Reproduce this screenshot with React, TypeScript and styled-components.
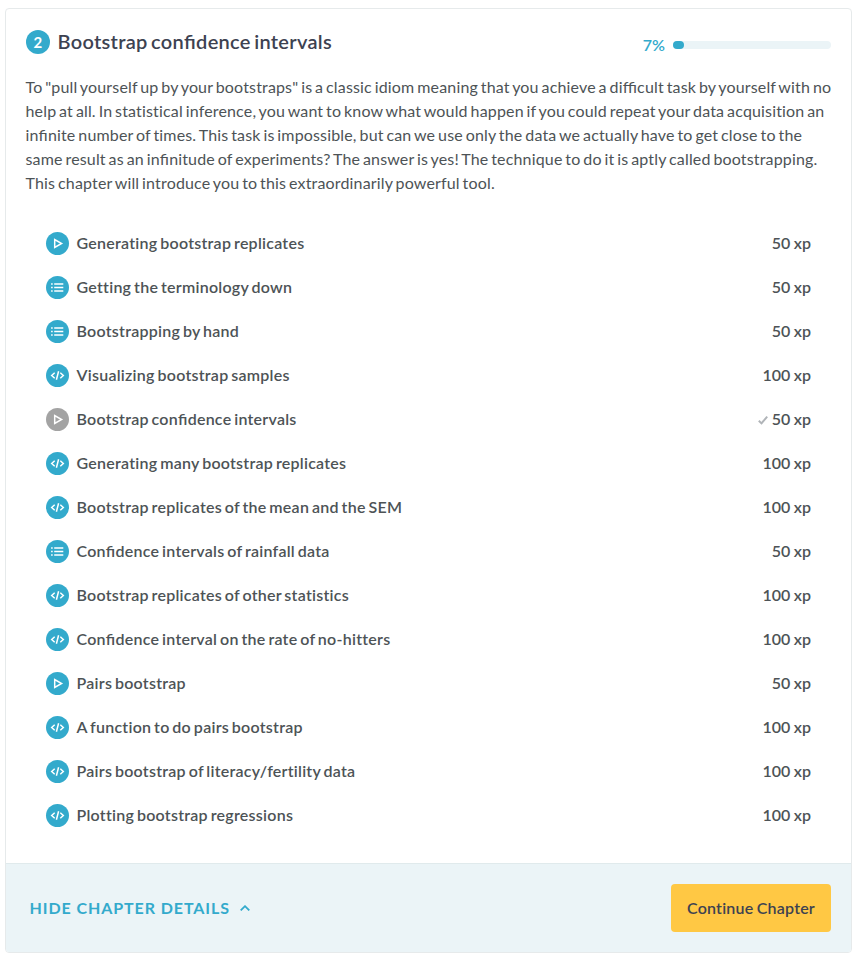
import React from "react";
import styled, { createGlobalStyle } from "styled-components";

const Global = createGlobalStyle`
  *, *::before, *::after { box-sizing: border-box; }
  body {
    margin: 0;
    background: #fff;
    color: #4d5356;
    font: 400 16px/24px Lato, "Liberation Sans", sans-serif;
    font-variant-ligatures: none;
    letter-spacing: 0.25px;
    word-spacing: -1.4px;
  }
`;

const Card = styled.article`
  width: 847px;
  height: 945px;
  margin: 8px 0 0 5px;
  border: 1px solid #e6eaeb;
  border-radius: 4px;
  overflow: hidden;
  display: flex;
  flex-direction: column;
`;

const Body = styled.div`
  flex: 1;
  padding: 20px 20px 0;
`;

const Header = styled.header`
  display: flex;
  justify-content: space-between;
  height: 26px;
`;

const Heading = styled.div`
  display: flex;
  align-items: center;
  gap: 7.5px;
`;

const Badge = styled.span`
  width: 24px;
  height: 24px;
  border-radius: 50%;
  background: #33aacc;
  color: #fff;
  font-size: 15px;
  font-weight: 700;
  line-height: 24px;
  text-align: center;
`;

const Title = styled.h4`
  margin: -2px 0 0;
  font-size: 20px;
  line-height: 26px;
  font-weight: 600;
  letter-spacing: 0.3px;
  word-spacing: -1.9px;
  color: #3d4251;
`;

const Progress = styled.div`
  display: flex;
  align-items: center;
  gap: 8px;
  padding-top: 6px;
  color: #33aacc;
  font-weight: 600;
  letter-spacing: 0;
`;

const Track = styled.div`
  width: 158px;
  height: 8px;
  border-radius: 4px;
  background: #ebf4f7;
`;

const Fill = styled.div`
  height: 100%;
  border-radius: 4px;
  background: #33aacc;
`;

const Description = styled.p`
  margin: 20px 0 0 -0.5px;
  white-space: nowrap;
  letter-spacing: 0.16px;
`;

const Ligature = styled.span`
  font-variant-ligatures: common-ligatures;
  font-feature-settings: "liga" 1;
`;

const List = styled.ul`
  list-style: none;
  margin: 26px 0 0;
  padding: 0 20px;
`;

const Item = styled.li`
  display: flex;
  align-items: center;
  height: 44px;
  font-weight: 600;
`;

const Disc = styled.span<{ $done?: boolean }>`
  width: 23px;
  height: 23px;
  margin-right: 7.5px;
  border-radius: 50%;
  background: ${(p) => (p.$done ? "#a3a3a3" : "#33aacc")};
  svg { display: block; }
`;

const Name = styled.span`
  flex: 1;
`;

const Points = styled.span`
  display: flex;
  align-items: center;
  gap: 3.5px;
  letter-spacing: 0;
  word-spacing: -0.5px;
  svg { margin-top: 1px; }
`;

const Footer = styled.footer`
  display: flex;
  align-items: center;
  justify-content: space-between;
  height: 89px;
  padding: 0 20px 0 23.5px;
  border-top: 1px solid #e0eaec;
  background: #ebf4f7;
`;

const Toggle = styled.button`
  display: flex;
  align-items: center;
  gap: 10px;
  padding: 0;
  border: 0;
  background: none;
  color: #33aacc;
  font: 700 16px/24px Lato, sans-serif;
  letter-spacing: 0.92px;
`;

const Continue = styled.button`
  width: 160px;
  height: 48px;
  padding: 0;
  border: 0;
  border-radius: 4px;
  background: #ffc844;
  color: #3d4251;
  font: 600 16px/24px Lato, sans-serif;
  font-variant-ligatures: none;
  letter-spacing: 0.22px;
  word-spacing: -1px;
`;

type Kind = "video" | "quiz" | "code";

const Icon = ({ kind }: { kind: Kind }) => (
  <svg width="23" height="23" viewBox="0 0 23 23" fill="none" stroke="#fff">
    {kind === "video" && <path d="M8.7 7.6v7.8l6.9-3.9z" strokeWidth="1.5" />}
    {kind === "quiz" && (
      <>
        <path d="M5.1 8h1.6M5.1 11.5h1.6M5.1 15h1.6" strokeWidth="1.4" />
        <path d="M8.2 8h9.1M8.2 11.5h9.1M8.2 15h9.1" strokeWidth="1.7" />
      </>
    )}
    {kind === "code" && (
      <path d="M8.7 8.8 5.7 11.5l3 2.7M14.3 8.8l3 2.7-3 2.7M12.6 7.2l-2.2 8.6" strokeWidth="1.5" />
    )}
  </svg>
);

const Check = () => (
  <svg width="10" height="10" viewBox="0 0 10 10" fill="none" stroke="#b0b4b8" strokeWidth="2">
    <path d="M.8 5.8 3.5 8.4 9.2 1.6" />
  </svg>
);

/* Joins only the f-i pairs; every other letter pair stays separate. */
const Text = ({ children }: { children: string }) => (
  <>
    {children.split(/(f?fi)/).map((part, i) => (i % 2 ? <Ligature key={i}>{part}</Ligature> : part))}
  </>
);

const description = [
  'To "pull yourself up by your bootstraps" is a classic idiom meaning that you achieve a difficult task by yourself with no',
  "help at all. In statistical inference, you want to know what would happen if you could repeat your data acquisition an",
  "infinite number of times. This task is impossible, but can we use only the data we actually have to get close to the",
  "same result as an infinitude of experiments? The answer is yes! The technique to do it is aptly called bootstrapping.",
  "This chapter will introduce you to this extraordinarily powerful tool.",
];

const exercises: { name: string; kind: Kind; xp: number; done?: boolean }[] = [
  { name: "Generating bootstrap replicates", kind: "video", xp: 50 },
  { name: "Getting the terminology down", kind: "quiz", xp: 50 },
  { name: "Bootstrapping by hand", kind: "quiz", xp: 50 },
  { name: "Visualizing bootstrap samples", kind: "code", xp: 100 },
  { name: "Bootstrap confidence intervals", kind: "video", xp: 50, done: true },
  { name: "Generating many bootstrap replicates", kind: "code", xp: 100 },
  { name: "Bootstrap replicates of the mean and the SEM", kind: "code", xp: 100 },
  { name: "Confidence intervals of rainfall data", kind: "quiz", xp: 50 },
  { name: "Bootstrap replicates of other statistics", kind: "code", xp: 100 },
  { name: "Confidence interval on the rate of no-hitters", kind: "code", xp: 100 },
  { name: "Pairs bootstrap", kind: "video", xp: 50 },
  { name: "A function to do pairs bootstrap", kind: "code", xp: 100 },
  { name: "Pairs bootstrap of literacy/fertility data", kind: "code", xp: 100 },
  { name: "Plotting bootstrap regressions", kind: "code", xp: 100 },
];

const percent = 7;

export default function App() {
  return (
    <>
      <Global />
      <Card>
        <Body>
          <Header>
            <Heading>
              <Badge>2</Badge>
              <Title>
                <Text>Bootstrap confidence intervals</Text>
              </Title>
            </Heading>
            <Progress>
              {percent}%
              <Track>
                <Fill style={{ width: `${percent}%` }} />
              </Track>
            </Progress>
          </Header>
          <Description>
            {description.map((line) => (
              <React.Fragment key={line}>
                <Text>{line}</Text>
                <br />
              </React.Fragment>
            ))}
          </Description>
          <List>
            {exercises.map((e) => (
              <Item key={e.name}>
                <Disc $done={e.done}>
                  <Icon kind={e.kind} />
                </Disc>
                <Name>
                  <Text>{e.name}</Text>
                </Name>
                <Points>
                  {e.done && <Check />}
                  {e.xp} xp
                </Points>
              </Item>
            ))}
          </List>
        </Body>
        <Footer>
          <Toggle>
            HIDE CHAPTER DETAILS
            <svg width="10" height="6" viewBox="0 0 10 6" fill="none" stroke="#33aacc" strokeWidth="1.8">
              <path d="M.7 5.4 5 1.2l4.3 4.2" />
            </svg>
          </Toggle>
          <Continue>Continue Chapter</Continue>
        </Footer>
      </Card>
    </>
  );
}
